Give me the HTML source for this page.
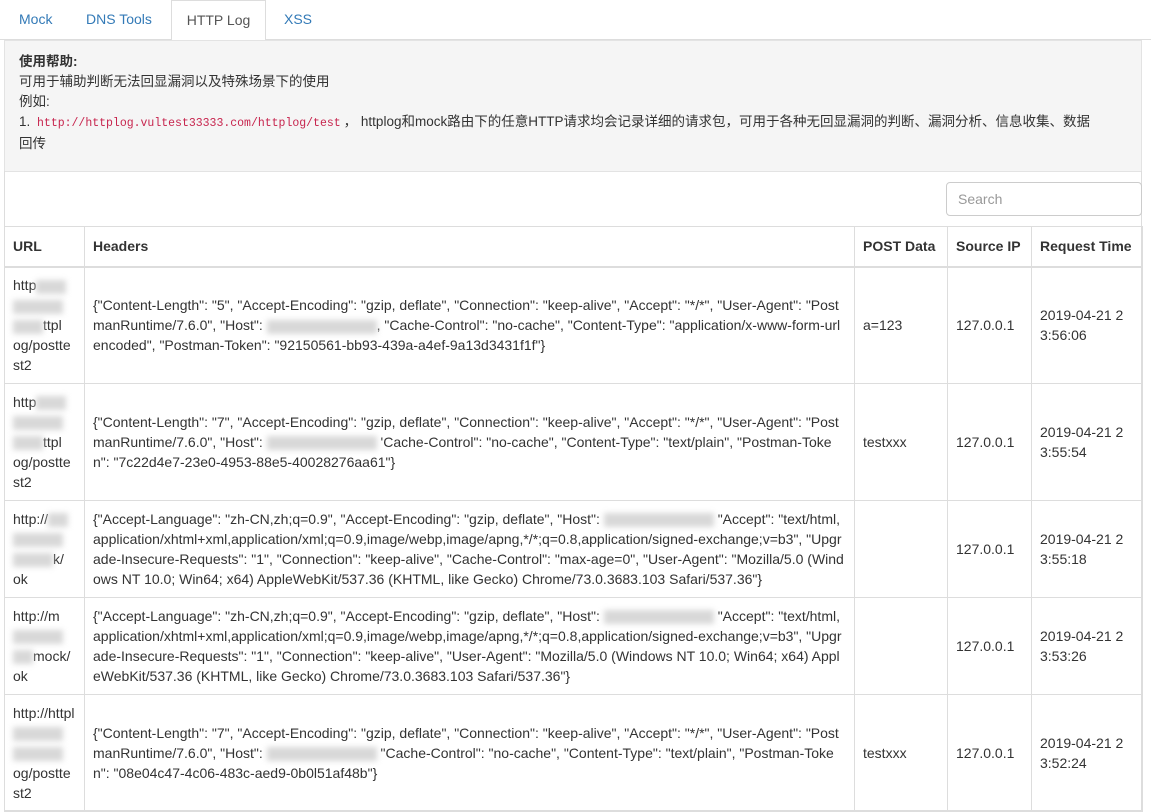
<!DOCTYPE html>
<html><head><meta charset="utf-8"><style>
*{box-sizing:border-box}
body{margin:0;width:1151px;height:800px;overflow:hidden;background:#fff;font-family:"Liberation Sans","Noto Sans CJK SC",sans-serif;font-size:14px;color:#333}
.tabs{position:absolute;left:0;top:0;width:1151px;height:40px;border-bottom:1px solid #ddd}
.tab{position:absolute;top:0;height:40px;line-height:38px;color:#337ab7;font-size:14px}
.tab.act{background:#fff;border:1px solid #ddd;border-bottom-color:#fff;color:#555;height:41px}
.help{position:absolute;left:4px;top:40px;width:1138px;height:132px;background:#f5f5f5;border:1px solid #e3e3e3;padding:11px 14px;line-height:20px;font-size:13.5px}
code{font-family:"Liberation Mono",monospace;color:#c7254e;font-size:11.5px;padding:0 3px}
.box{position:absolute;left:4px;top:171px;width:1138px;height:640px;border:1px solid #ddd;border-top:none}
.search{position:absolute;left:946px;top:182px;width:196px;height:34px;border:1px solid #ccc;border-radius:4px;padding:0 11px;line-height:32px;color:#999;font-size:14px}
table{position:absolute;left:4px;top:226px;border-collapse:collapse;width:1138px;table-layout:fixed}
td,th{border:1px solid #ddd;padding:0 8px;vertical-align:middle;line-height:20px;word-break:break-all;text-align:left}
th{height:40px;border-bottom:2px solid #ddd;font-weight:bold;font-size:14px}
.bl{display:inline-block;background:#d8d8d8;filter:blur(3px);height:14px;vertical-align:middle}
</style></head><body>
<div class="tabs">
<div class="tab" style="left:19px">Mock</div>
<div class="tab" style="left:86px">DNS Tools</div>
<div class="tab act" style="left:171px;width:95px;text-align:center">HTTP Log</div>
<div class="tab" style="left:284px">XSS</div>
</div>
<div class="help"><b>使用帮助:</b><br>可用于辅助判断无法回显漏洞以及特殊场景下的使用<br>例如:<br>1. <code>http://httplog.vultest33333.com/httplog/test</code>， httplog和mock路由下的任意HTTP请求均会记录详细的请求包，可用于各种无回显漏洞的判断、漏洞分析、信息收集、数据<br>回传</div>
<div class="box"></div>
<div class="search">Search</div>
<table>
<colgroup><col style="width:80px"><col style="width:770px"><col style="width:93px"><col style="width:84px"><col style="width:111px"></colgroup>
<tr><th>URL</th><th>Headers</th><th>POST Data</th><th>Source IP</th><th>Request Time</th></tr>
<tr style="height:117px"><td>http<span class="bl" style="width:30px"></span><br><span class="bl" style="width:50px"></span><br><span class="bl" style="width:30px"></span>ttpl<br>og/postte<br>st2</td><td>{"Content-Length": "5", "Accept-Encoding": "gzip, deflate", "Connection": "keep-alive", "Accept": "*/*", "User-Agent": "PostmanRuntime/7.6.0", "Host": <span class="bl" style="width:110px"></span>, "Cache-Control": "no-cache", "Content-Type": "application/x-www-form-urlencoded", "Postman-Token": "92150561-bb93-439a-a4ef-9a13d3431f1f"}</td><td>a=123</td><td>127.0.0.1</td><td>2019-04-21 23:56:06</td></tr>
<tr style="height:117px"><td>http<span class="bl" style="width:30px"></span><br><span class="bl" style="width:50px"></span><br><span class="bl" style="width:30px"></span>ttpl<br>og/postte<br>st2</td><td>{"Content-Length": "7", "Accept-Encoding": "gzip, deflate", "Connection": "keep-alive", "Accept": "*/*", "User-Agent": "PostmanRuntime/7.6.0", "Host": <span class="bl" style="width:110px"></span> 'Cache-Control": "no-cache", "Content-Type": "text/plain", "Postman-Token": "7c22d4e7-23e0-4953-88e5-40028276aa61"}</td><td>testxxx</td><td>127.0.0.1</td><td>2019-04-21 23:55:54</td></tr>
<tr style="height:97px"><td>http://<span class="bl" style="width:20px"></span><br><span class="bl" style="width:50px"></span><br><span class="bl" style="width:40px"></span>k/<br>ok</td><td>{"Accept-Language": "zh-CN,zh;q=0.9", "Accept-Encoding": "gzip, deflate", "Host": <span class="bl" style="width:110px"></span> "Accept": "text/html,application/xhtml+xml,application/xml;q=0.9,image/webp,image/apng,*/*;q=0.8,application/signed-exchange;v=b3", "Upgrade-Insecure-Requests": "1", "Connection": "keep-alive", "Cache-Control": "max-age=0", "User-Agent": "Mozilla/5.0 (Windows NT 10.0; Win64; x64) AppleWebKit/537.36 (KHTML, like Gecko) Chrome/73.0.3683.103 Safari/537.36"}</td><td></td><td>127.0.0.1</td><td>2019-04-21 23:55:18</td></tr>
<tr style="height:97px"><td>http://m<br><span class="bl" style="width:50px"></span><br><span class="bl" style="width:20px"></span>mock/<br>ok</td><td>{"Accept-Language": "zh-CN,zh;q=0.9", "Accept-Encoding": "gzip, deflate", "Host": <span class="bl" style="width:110px"></span> "Accept": "text/html,application/xhtml+xml,application/xml;q=0.9,image/webp,image/apng,*/*;q=0.8,application/signed-exchange;v=b3", "Upgrade-Insecure-Requests": "1", "Connection": "keep-alive", "User-Agent": "Mozilla/5.0 (Windows NT 10.0; Win64; x64) AppleWebKit/537.36 (KHTML, like Gecko) Chrome/73.0.3683.103 Safari/537.36"}</td><td></td><td>127.0.0.1</td><td>2019-04-21 23:53:26</td></tr>
<tr style="height:117px"><td>http://httpl<br><span class="bl" style="width:50px"></span><br><span class="bl" style="width:50px"></span><br>og/postte<br>st2</td><td>{"Content-Length": "7", "Accept-Encoding": "gzip, deflate", "Connection": "keep-alive", "Accept": "*/*", "User-Agent": "PostmanRuntime/7.6.0", "Host": <span class="bl" style="width:110px"></span> "Cache-Control": "no-cache", "Content-Type": "text/plain", "Postman-Token": "08e04c47-4c06-483c-aed9-0b0l51af48b"}</td><td>testxxx</td><td>127.0.0.1</td><td>2019-04-21 23:52:24</td></tr>
</table>
</body></html>
